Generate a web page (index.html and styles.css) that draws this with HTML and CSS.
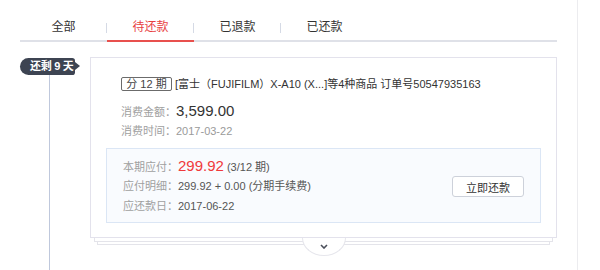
FILE: index.html
```html
<!DOCTYPE html>
<html lang="zh-CN">
<head>
<meta charset="utf-8">
<title>待还款</title>
<link rel="stylesheet" href="styles.css">
</head>
<body>
<div class="page">
  <nav class="tabs">
    <a class="tab">全部</a>
    <a class="tab active">待还款</a>
    <a class="tab">已退款</a>
    <a class="tab">已还款</a>
  </nav>
  <div class="timeline">
    <div class="rail">
      <span class="badge">还剩 9 天</span>
      <span class="line"></span>
    </div>
    <div class="entry">
      <div class="card">
        <div class="summary">
          <div class="title"><span class="tag">分 12 期</span><span class="name">[富士（FUJIFILM）X-A10 (X...]等4种商品 订单号50547935163</span></div>
          <div class="row gap"><span class="label">消费金额：</span><span class="amount">3,599.00</span></div>
          <div class="row"><span class="label">消费时间：</span><span class="muted">2017-03-22</span></div>
        </div>
        <div class="due">
          <div class="due-info">
            <div class="row"><span class="label">本期应付：</span><span class="amount red">299.92</span> <span class="val">(3/12 期)</span></div>
            <div class="row"><span class="label">应付明细：</span><span class="val">299.92 + 0.00 (分期手续费)</span></div>
            <div class="row"><span class="label">应还款日：</span><span class="val">2017-06-22</span></div>
          </div>
          <button class="pay">立即还款</button>
        </div>
      </div>
      <div class="stack s1"></div>
      <div class="stack s2"></div>
      <div class="toggle">
        <svg width="8" height="5" viewBox="0 0 8 5"><path d="M1 1 L4 4 L7 1" fill="none" stroke="#4a4f5a" stroke-width="1.6"/></svg>
      </div>
    </div>
  </div>
</div>
</body>
</html>
```
FILE: styles.css
```css
* { box-sizing: border-box; }
html, body { margin: 0; padding: 0; background: #fff; }
body {
  font-family: "Liberation Sans", "Noto Sans CJK SC", sans-serif;
  font-size: 11px;
  color: #333;
}
.page {
  width: 578px;
  height: 270px;
  padding: 0 20px;
  border-right: 1px solid #ececef;
  display: flex;
  flex-direction: column;
  overflow: hidden;
}
.tabs {
  display: flex;
  padding-top: 17px;
  border-bottom: 2px solid #dfe1e8;
}
.tab {
  position: relative;
  width: 87px;
  height: 23px;
  line-height: 20px;
  text-align: center;
  font-size: 12px;
  color: #333;
}
.tab:not(:last-child)::after {
  content: "";
  position: absolute;
  right: 0;
  top: 6px;
  width: 1px;
  height: 10px;
  background: #d5dae5;
}
.tab.active {
  color: #e8403f;
  border-bottom: 2px solid #e8504d;
  height: 25px;
  margin-bottom: -2px;
}
.timeline {
  flex: 1;
  display: flex;
  margin-top: 15px;
}
.rail {
  width: 70px;
  flex: none;
  display: flex;
  flex-direction: column;
  padding-top: 1px;
}
.badge {
  position: relative;
  align-self: flex-start;
  height: 17px;
  line-height: 17px;
  padding: 0 2px 0 10px;
  white-space: nowrap;
  background: #3d4452;
  color: #fff;
  font-weight: bold;
  font-size: 11px;
  letter-spacing: -0.3px;
  border-radius: 9px 3px 3px 9px;
}
.badge::after {
  content: "";
  position: absolute;
  right: -5px;
  top: 4px;
  border-left: 5px solid #3d4452;
  border-top: 4.5px solid transparent;
  border-bottom: 4.5px solid transparent;
}
.line {
  flex: 1;
  width: 1px;
  margin-left: 29px;
  background: #bfc8dc;
}
.entry {
  flex: 1;
  display: flex;
  flex-direction: column;
}
.card {
  position: relative;
  z-index: 2;
  background: #fff;
  border: 1px solid #e3e2ec;
  padding: 0 15px 14px;
}
.summary {
  padding: 16px 0 0 15px;
}
.title {
  height: 20px;
  line-height: 20px;
  display: flex;
  align-items: center;
  margin-bottom: 7px;
  color: #333;
}
.tag {
  display: inline-block;
  width: 51px;
  height: 14px;
  line-height: 12px;
  border: 1px solid #6b6b6b;
  border-radius: 2px;
  text-align: center;
  color: #444;
  margin-right: 3px;
}
.row {
  height: 20px;
  line-height: 20px;
  white-space: nowrap;
}
.label { color: #a0a0a0; }
.muted { color: #9a9a9a; }
.val { color: #555; }
.amount {
  font-size: 15px;
  line-height: 20px;
  color: #333;
}
.amount.red { color: #f0393b; }
.due {
  margin-top: 7px;
  display: flex;
  align-items: center;
  justify-content: space-between;
  background: #f9fbfe;
  border: 1px solid #dbe6f5;
  padding: 7px 16px 6px;
}
.pay {
  width: 72px;
  height: 21px;
  padding: 0;
  font: inherit;
  font-size: 11px;
  color: #333;
  background: #fff;
  border: 1px solid #cdd1da;
  border-radius: 3px;
  margin-top: 1px;
}
.stack {
  background: #fff;
  border: 1px solid #e4e4ea;
  border-top: none;
}
.s1 { margin: 0 4px; height: 4px; position: relative; z-index: 1; }
.s2 { margin: 0 7px; height: 3px; }
.toggle {
  position: relative;
  z-index: 1;
  align-self: center;
  width: 44px;
  height: 18px;
  margin-top: -7px;
  background: #fff;
  border: 1px solid #e6e6ec;
  border-top: none;
  border-radius: 0 0 22px 22px / 0 0 18px 18px;
  display: flex;
  justify-content: center;
  padding-top: 6px;
}
.toggle svg { display: block; }
```
